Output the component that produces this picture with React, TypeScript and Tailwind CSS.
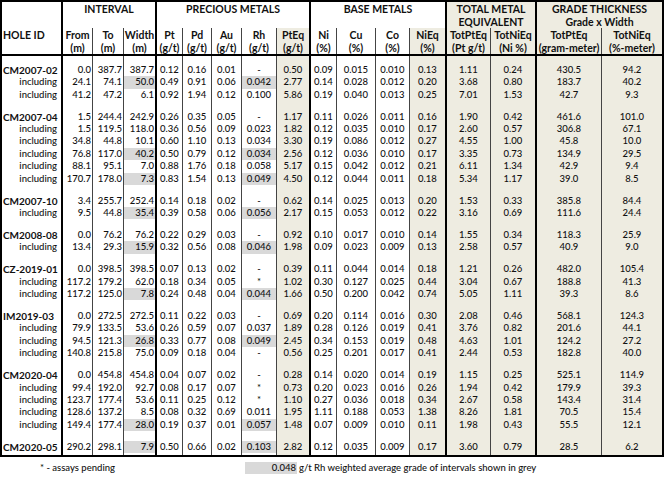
import React from "react";

const GRID =
  "grid grid-cols-[61px_30px_31px_33px_26px_29px_30px_35px_34px_26px_39px_34px_37px_44px_46px_65px_60px]";

const THIN = "border-r border-[#444444]";
const THICK = "border-r-2 border-black";

const BORDERS = [
  THICK, THIN, THIN, THICK, THIN, THIN, THIN, THIN, THICK,
  THIN, THIN, THIN, THICK, THIN, THICK, THIN, "",
];
const BEIGE = [
  false, false, false, false, false, false, false, false, true,
  false, false, false, true, true, true, true, true,
];

type Row = { v: string[]; g?: boolean };

const groups: Row[][] = [
  [
    { v: ["CM2007-02", "0.0", "387.7", "387.7", "0.12", "0.16", "0.01", "-", "0.50", "0.09", "0.015", "0.010", "0.13", "1.11", "0.24", "430.5", "94.2"] },
    { v: ["including", "24.1", "74.1", "50.0", "0.49", "0.91", "0.06", "0.042", "2.77", "0.14", "0.028", "0.012", "0.20", "3.68", "0.80", "183.7", "40.2"], g: true },
    { v: ["including", "41.2", "47.2", "6.1", "0.92", "1.94", "0.12", "0.100", "5.86", "0.19", "0.040", "0.013", "0.25", "7.01", "1.53", "42.7", "9.3"] },
  ],
  [
    { v: ["CM2007-04", "1.5", "244.4", "242.9", "0.26", "0.35", "0.05", "-", "1.17", "0.11", "0.026", "0.011", "0.16", "1.90", "0.42", "461.6", "101.0"] },
    { v: ["including", "1.5", "119.5", "118.0", "0.36", "0.56", "0.09", "0.023", "1.82", "0.12", "0.035", "0.010", "0.17", "2.60", "0.57", "306.8", "67.1"] },
    { v: ["including", "34.8", "44.8", "10.1", "0.60", "1.10", "0.13", "0.034", "3.30", "0.19", "0.086", "0.012", "0.27", "4.55", "1.00", "45.8", "10.0"] },
    { v: ["including", "76.8", "117.0", "40.2", "0.50", "0.79", "0.12", "0.034", "2.56", "0.12", "0.036", "0.010", "0.17", "3.35", "0.73", "134.9", "29.5"], g: true },
    { v: ["including", "88.1", "95.1", "7.0", "0.88", "1.76", "0.18", "0.058", "5.17", "0.15", "0.042", "0.012", "0.21", "6.11", "1.34", "42.9", "9.4"] },
    { v: ["including", "170.7", "178.0", "7.3", "0.83", "1.54", "0.13", "0.049", "4.50", "0.12", "0.044", "0.011", "0.18", "5.34", "1.17", "39.0", "8.5"], g: true },
  ],
  [
    { v: ["CM2007-10", "3.4", "255.7", "252.4", "0.14", "0.18", "0.02", "-", "0.62", "0.14", "0.025", "0.013", "0.20", "1.53", "0.33", "385.8", "84.4"] },
    { v: ["including", "9.5", "44.8", "35.4", "0.39", "0.58", "0.06", "0.056", "2.17", "0.15", "0.053", "0.012", "0.22", "3.16", "0.69", "111.6", "24.4"], g: true },
  ],
  [
    { v: ["CM2008-08", "0.0", "76.2", "76.2", "0.22", "0.29", "0.03", "-", "0.92", "0.10", "0.017", "0.010", "0.14", "1.55", "0.34", "118.3", "25.9"] },
    { v: ["including", "13.4", "29.3", "15.9", "0.32", "0.56", "0.08", "0.046", "1.98", "0.09", "0.023", "0.009", "0.13", "2.58", "0.57", "40.9", "9.0"], g: true },
  ],
  [
    { v: ["CZ-2019-01", "0.0", "398.5", "398.5", "0.07", "0.13", "0.02", "-", "0.39", "0.11", "0.044", "0.014", "0.18", "1.21", "0.26", "482.0", "105.4"] },
    { v: ["including", "117.2", "179.2", "62.0", "0.18", "0.34", "0.05", "*", "1.02", "0.30", "0.127", "0.025", "0.44", "3.04", "0.67", "188.8", "41.3"] },
    { v: ["including", "117.2", "125.0", "7.8", "0.24", "0.48", "0.04", "0.044", "1.66", "0.50", "0.200", "0.042", "0.74", "5.05", "1.11", "39.3", "8.6"], g: true },
  ],
  [
    { v: ["IM2019-03", "0.0", "272.5", "272.5", "0.11", "0.22", "0.03", "-", "0.69", "0.20", "0.114", "0.016", "0.30", "2.08", "0.46", "568.1", "124.3"] },
    { v: ["including", "79.9", "133.5", "53.6", "0.26", "0.59", "0.07", "0.037", "1.89", "0.28", "0.126", "0.019", "0.41", "3.76", "0.82", "201.6", "44.1"] },
    { v: ["including", "94.5", "121.3", "26.8", "0.33", "0.77", "0.08", "0.049", "2.45", "0.34", "0.153", "0.019", "0.48", "4.63", "1.01", "124.2", "27.2"], g: true },
    { v: ["including", "140.8", "215.8", "75.0", "0.09", "0.18", "0.04", "-", "0.56", "0.25", "0.201", "0.017", "0.41", "2.44", "0.53", "182.8", "40.0"] },
  ],
  [
    { v: ["CM2020-04", "0.0", "454.8", "454.8", "0.04", "0.07", "0.02", "-", "0.28", "0.14", "0.020", "0.014", "0.19", "1.15", "0.25", "525.1", "114.9"] },
    { v: ["including", "99.4", "192.0", "92.7", "0.08", "0.17", "0.07", "*", "0.73", "0.20", "0.023", "0.016", "0.26", "1.94", "0.42", "179.9", "39.3"] },
    { v: ["including", "123.7", "177.4", "53.6", "0.11", "0.25", "0.12", "*", "1.10", "0.27", "0.036", "0.018", "0.34", "2.67", "0.58", "143.4", "31.4"] },
    { v: ["including", "128.6", "137.2", "8.5", "0.08", "0.32", "0.69", "0.011", "1.95", "1.11", "0.188", "0.053", "1.38", "8.26", "1.81", "70.5", "15.4"] },
    { v: ["including", "149.4", "177.4", "28.0", "0.19", "0.37", "0.01", "0.057", "1.48", "0.07", "0.009", "0.010", "0.11", "1.98", "0.43", "55.5", "12.1"], g: true },
  ],
  [
    { v: ["CM2020-05", "290.2", "298.1", "7.9", "0.50", "0.66", "0.02", "0.103", "2.82", "0.12", "0.035", "0.009", "0.17", "3.60", "0.79", "28.5", "6.2"], g: true },
  ],
];

function Spacer({ h }: { h: string }) {
  return (
    <div className={`${GRID} ${h}`}>
      {BORDERS.map((b, i) => (
        <div key={i} className={`${b} ${BEIGE[i] ? "bg-[#eeece1]" : ""}`} />
      ))}
    </div>
  );
}

function DataRow({ r }: { r: Row }) {
  return (
    <div className={`${GRID} h-[12.4px] leading-[12.4px]`}>
      {r.v.map((val, i) => {
        const grey = r.g && (i === 3 || i === 7);
        const bg = grey ? "bg-[#d9d9d9]" : BEIGE[i] ? "bg-[#eeece1]" : "";
        let align = "text-center";
        if (i === 0) {
          align =
            val === "including"
              ? "text-right pr-[4px]"
              : "text-left pl-[1px] font-bold text-[10px]";
        } else if (i <= 3) {
          align = "text-right pr-[1px]";
        }
        return (
          <div key={i} className={`${BORDERS[i]} ${bg} ${align} whitespace-nowrap overflow-hidden`}>
            {val}
          </div>
        );
      })}
    </div>
  );
}

export default function App() {
  const thin = "border-r border-[#444444]";
  return (
    <div
      className="w-[665px] h-[481px] bg-white text-[#111111] text-[9.5px] font-medium overflow-hidden"
      style={{ fontFamily: "Lato, 'Open Sans', sans-serif" }}
    >
      <div className="w-[664px] border-2 border-black">
        {/* header */}
        <div className={`${GRID} grid-rows-[26px_26px] border-b-2 border-black font-bold text-[10.5px] leading-[13px]`}>
          <div className="row-span-2 border-r-2 border-black pl-[1px] pt-[27px]">HOLE ID</div>
          <div className="col-span-3 border-r-2 border-black text-center pt-[1px]">INTERVAL</div>
          <div className="col-span-5 border-r-2 border-black text-center pt-[1px]">PRECIOUS METALS</div>
          <div className="col-span-4 border-r-2 border-black text-center pt-[1px]">BASE METALS</div>
          <div className="col-span-2 border-r-2 border-black text-center pt-[1px] bg-[#eeece1]">
            TOTAL METAL
            <br />
            EQUIVALENT
          </div>
          <div className="col-span-2 text-center pt-[1px] bg-[#eeece1]">
            GRADE THICKNESS
            <br />
            Grade x Width
          </div>
          <div className={`${thin} text-center pt-[1px]`}>From<br />(m)</div>
          <div className={`${thin} text-center pt-[1px]`}>To<br />(m)</div>
          <div className="border-r-2 border-black text-center pt-[1px]">Width<br />(m)</div>
          <div className={`${thin} text-center pt-[1px]`}>Pt<br />(g/t)</div>
          <div className={`${thin} text-center pt-[1px]`}>Pd<br />(g/t)</div>
          <div className={`${thin} text-center pt-[1px]`}>Au<br />(g/t)</div>
          <div className={`${thin} text-center pt-[1px]`}>Rh<br />(g/t)</div>
          <div className="border-r-2 border-black text-center pt-[1px] bg-[#eeece1]">PtEq<br />(g/t)</div>
          <div className={`${thin} text-center pt-[1px]`}>Ni<br />(%)</div>
          <div className={`${thin} text-center pt-[1px]`}>Cu<br />(%)</div>
          <div className={`${thin} text-center pt-[1px]`}>Co<br />(%)</div>
          <div className="border-r-2 border-black text-center pt-[1px] bg-[#eeece1]">NiEq<br />(%)</div>
          <div className={`${thin} text-center pt-[1px] bg-[#eeece1] whitespace-nowrap`}>TotPtEq<br />(Pt g/t)</div>
          <div className="border-r-2 border-black text-center pt-[1px] bg-[#eeece1] whitespace-nowrap">TotNiEq<br />(Ni %)</div>
          <div className={`${thin} text-center pt-[1px] bg-[#eeece1] whitespace-nowrap`}>TotPtEq<br />(gram-meter)</div>
          <div className="text-center pt-[1px] bg-[#eeece1] whitespace-nowrap">TotNiEq<br />(%-meter)</div>
        </div>
        {/* body */}
        <Spacer h="h-[7.8px]" />
        {groups.map((g, gi) => (
          <React.Fragment key={gi}>
            {gi > 0 && <Spacer h="h-[9.6px]" />}
            {g.map((r, ri) => (
              <DataRow key={ri} r={r} />
            ))}
          </React.Fragment>
        ))}
        <Spacer h="h-[2px]" />
      </div>
      {/* footer */}
      <div className="flex items-center h-[12px] mt-[5px] leading-[12px]">
        <div className="w-[245px] pl-[40px]">* - assays pending</div>
        <div className="w-[52px] bg-[#d9d9d9] text-right pr-[1px]">0.048</div>
        <div className="pl-[2px]">g/t Rh weighted average grade of intervals shown in grey</div>
      </div>
    </div>
  );
}
